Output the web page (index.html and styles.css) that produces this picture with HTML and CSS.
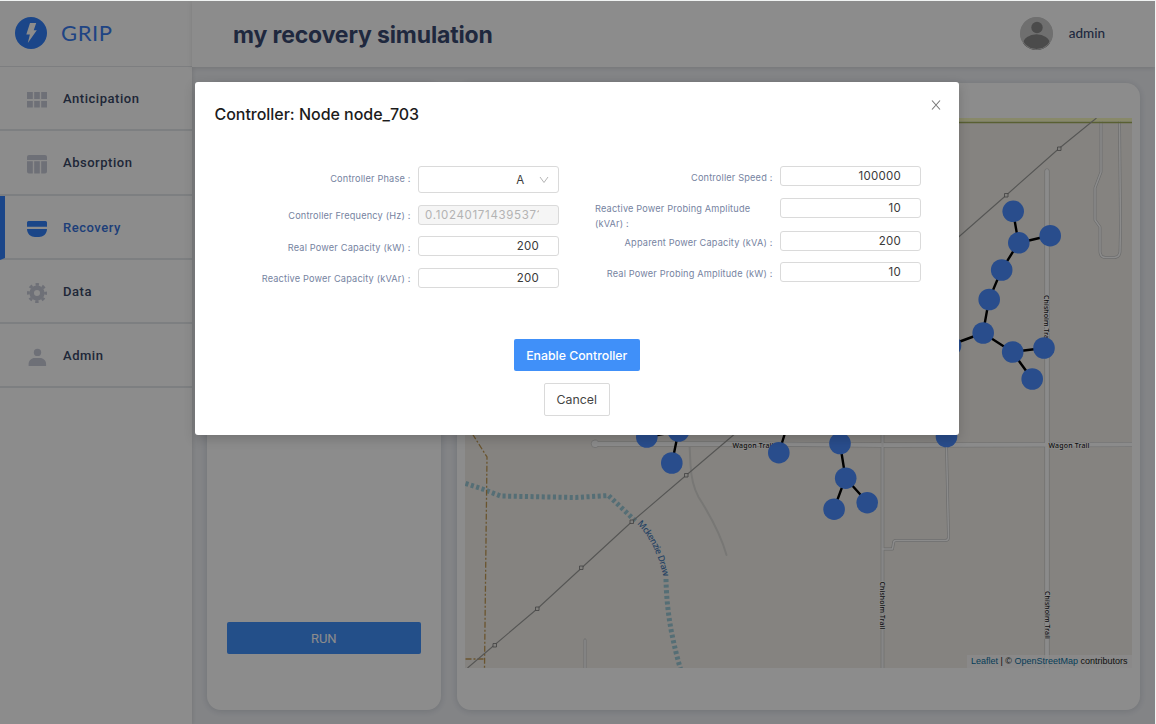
FILE: index.html
```html
<!DOCTYPE html>
<html lang="en">
<head>
<meta charset="utf-8">
<title>GRIP</title>
<link rel="stylesheet" href="styles.css">
</head>
<body>
<div class="app">
  <aside class="sidebar">
    <div class="brand">
      <svg class="logo" viewBox="0 0 32 32"><circle cx="16" cy="16" r="16" fill="#3280fa"/><path d="M15 6h6.2l-2.5 7.2h3.1L12.8 26l2.1-8.6h-3.6z" fill="#fff"/></svg>
      <span class="brand-name">GRIP</span>
    </div>
    <nav>
      <a class="item"><svg class="icon" viewBox="0 0 20 20"><path d="M0 2h5.8v7H0zM7.2 2h5.6v7H7.2zM14.2 2H20v7h-5.8zM0 11h5.8v6.500H0zM7.200 11h5.600v6.500H7.200zM14.200 11H20v6.500h-5.800z"/></svg><span>Anticipation</span></a>
      <a class="item"><svg class="icon" viewBox="0 0 20 20"><path d="M2 1h16a2 2 0 0 1 2 2v3H0V3a2 2 0 0 1 2-2zM0 7.200h5.800v12.300H2a2 2 0 0 1-2-2zM7.200 7.200h5.600v12.300H7.200zM14.200 7.200H20v10.300a2 2 0 0 1-2 2h-3.800z"/></svg><span>Absorption</span></a>
      <a class="item active"><svg class="icon" viewBox="0 0 20 20"><path d="M1.500 2h17A1.500 1.500 0 0 1 20 3.500V7.800H0V3.500A1.500 1.500 0 0 1 1.500 2zM0 10h20c0 5-4 8-8 8H8c-4 0-8-3-8-8z"/></svg><span>Recovery</span></a>
      <a class="item"><svg class="icon" viewBox="0 0 20 20"><circle cx="10" cy="10" r="5.300" fill="none" stroke="#c9ccd9" stroke-width="4.600"/><circle cx="10" cy="10" r="8.600" fill="none" stroke="#c9ccd9" stroke-width="2.800" stroke-dasharray="3.377 3.377" stroke-dashoffset="1.688"/></svg><span>Data</span></a>
      <a class="item"><svg class="icon" viewBox="0 0 20 20"><circle cx="10.500" cy="5.400" r="3.700"/><path d="M1.600 19v-2c0-3.500 3-6 6-6h5.500c3 0 6 2.500 6 6v2z"/></svg><span>Admin</span></a>
    </nav>
  </aside>
  <div class="content">
    <header class="topbar">
      <h1>my recovery simulation</h1>
      <div class="user">
        <svg class="avatar" viewBox="0 0 33 33"><clipPath id="av"><circle cx="16.500" cy="16.500" r="16.500"/></clipPath><g clip-path="url(#av)"><rect width="33" height="33" fill="#cbcbcb"/><circle cx="17" cy="10.500" r="5.700" fill="#898989"/><ellipse cx="16.500" cy="26.500" rx="13.300" ry="9.300" fill="#898989"/></g><circle cx="16.500" cy="16.500" r="16" fill="none" stroke="#cbcbcb" stroke-width="1"/></svg>
        <span>admin</span>
      </div>
    </header>
    <main class="panels">
      <section class="card controls"><button class="run">RUN</button></section>
      <section class="card map-card">
        <div class="map">
          <svg class="map-canvas" viewBox="464.500 118 667 550">
            <rect x="464" y="118" width="668" height="550" fill="#f2efe9"/>
            <g fill="none" stroke-linejoin="round" stroke-linecap="round">
              <g class="road-edge">
                <path class="wide" d="M594 444H740L882 445L1140 444.500M1046.500 171V680"/>
                <path class="mid" d="M882 425V680"/>
                <path class="thin" d="M882 549H892L893 543Q893 540.500 895.500 540.500H945Q948 540.500 948 537L946 445M1100.500 118V172L1094.500 188V220L1099.500 227V252Q1100 257.500 1105 257.500H1114Q1119 257 1119.500 252L1120 228L1119 118M584.500 640V680"/>
                <circle cx="594.500" cy="443.800" r="3.800" fill="#fff" stroke="#c8c8c8" stroke-width=".7"/>
              </g>
              <path class="track" d="M689 444L690 465Q691 484 698 497Q719 530 726 555"/>
              <g class="road">
                <path class="wide" d="M594 444H740L882 445L1140 444.500M1046.500 171V680"/>
                <path class="mid" d="M882 425V680"/>
                <path class="thin" d="M882 549H892L893 543Q893 540.500 895.500 540.500H945Q948 540.500 948 537L946 445M1100.500 118V172L1094.500 188V220L1099.500 227V252Q1100 257.500 1105 257.500H1114Q1119 257 1119.500 252L1120 228L1119 118M584.500 640V680"/>
              </g>
            </g>
            <path d="M464 119.500H1132" stroke="#f7fabf" stroke-width="4"/>
            <path d="M464 122.500H1132" stroke="#a3b05b" stroke-width="1.500"/>
            <path d="M465 483.500L482 489L500 496L575 497.500L608 495.500L635 521" class="water"/>
            <path d="M665.500 579Q666 606 671 632Q675 652 680 669" class="water"/>
            <path d="M472 434L486.500 457L485.500 541L484 668M465 659H484" class="border"/>
            <path d="M1096 118L1058.500 148.500L1006 195L957 238L733 435L686 475L631 522L581 568L536.500 609L494 645L467 668" fill="none" stroke="#9c9c9a" stroke-width="1.100"/>
            <g class="poles"><path d="M1057 147h3.500v3.500h-3.500zM1004 193.500h3.500v3.500h-3.500zM684 473.500h3.500v3.500h-3.500zM629.500 520h3.500v3.500h-3.500zM579 566h3.500v3.500h-3.500zM535 607h3.500v3.500h-3.500zM492.500 643.500h3.500v3.500h-3.500z"/></g>
            <path id="draw" d="M636.500 524Q656 543 663.500 580" fill="none"/>
            <text class="river"><textPath href="#draw" textLength="60">Mckenzie Draw</textPath></text>
            <g class="road-name">
              <text x="732" y="447.800" textLength="41">Wagon Trail</text>
              <text x="1048" y="447.600" textLength="41">Wagon Trail</text>
              <text transform="translate(1043.300 295) rotate(90)" textLength="48">Chisholm Trail</text>
              <text transform="translate(1044.800 591) rotate(90)" textLength="48">Chisholm Trail</text>
              <text transform="translate(879.500 581.500) rotate(90)" textLength="48">Chisholm Trail</text>
            </g>
            <path d="M1012.500 211L1018 243L1049.500 235.500M1018 243L1001 270L988.500 299.500L982.500 333L1012 352L1043.500 348M1012 352L1031.500 379M982.500 333L950 345M646.500 437L678 431L671.500 463M778.500 452.500L787 425M839.500 443.500L845 478L833.500 509M845 478L867 502.500" fill="none" stroke="#000" stroke-width="2.400"/>
            <g fill="#4b8cff">
              <circle cx="1012.700" cy="211.300" r="10.800"/><circle cx="1049.700" cy="235.700" r="10.800"/><circle cx="1018.300" cy="242.800" r="10.800"/><circle cx="1001.200" cy="270" r="10.800"/><circle cx="988.700" cy="299.500" r="10.800"/><circle cx="982.700" cy="333" r="10.800"/><circle cx="1012.200" cy="352" r="10.800"/><circle cx="1043.500" cy="348" r="10.800"/><circle cx="1031.700" cy="379" r="10.800"/><circle cx="950" cy="345.500" r="10.800"/>
              <circle cx="646.300" cy="437" r="10.800"/><circle cx="678" cy="431" r="10.800"/><circle cx="671.300" cy="463" r="10.800"/><circle cx="778.300" cy="452.700" r="10.800"/><circle cx="839.500" cy="443.500" r="10.800"/><circle cx="845.200" cy="478.200" r="10.800"/><circle cx="833.600" cy="509.200" r="10.800"/><circle cx="866.700" cy="502.700" r="10.800"/><circle cx="946" cy="436.500" r="10.800"/>
            </g>
          </svg>
          <div class="attribution"><a>Leaflet</a> | © <a>OpenStreetMap</a> contributors</div>
        </div>
      </section>
    </main>
  </div>
  <div class="mask">
    <div class="modal">
      <div class="modal-head">
        <h2>Controller: Node node_703</h2>
        <svg class="close" viewBox="0 0 10 10"><path d="M1 .5l8 9M9 .5l-8 9" fill="none" stroke="#777" stroke-width="1.100"/></svg>
      </div>
      <div class="form">
        <div class="col left">
          <div class="row phase"><label>Controller Phase :</label><div class="field select"><span>A</span><svg class="chevron" viewBox="0 0 10 8"><path d="M1 1l4 5.500L9 1" fill="none" stroke="#b5b5b5"/></svg></div></div>
          <div class="row"><label>Controller Frequency (Hz) :</label><div class="field disabled"><span>0.102401714395371</span></div></div>
          <div class="row"><label>Real Power Capacity (kW) :</label><div class="field"><span>200</span></div></div>
          <div class="row"><label>Reactive Power Capacity (kVAr) :</label><div class="field"><span>200</span></div></div>
        </div>
        <div class="col right">
          <div class="row"><label>Controller Speed :</label><div class="field"><span>100000</span></div></div>
          <div class="row tall"><label>Reactive Power Probing Amplitude (kVAr) :</label><div class="field"><span>10</span></div></div>
          <div class="row"><label>Apparent Power Capacity (kVA) :</label><div class="field"><span>200</span></div></div>
          <div class="row"><label>Real Power Probing Amplitude (kW) :</label><div class="field"><span>10</span></div></div>
        </div>
      </div>
      <div class="actions">
        <button class="primary">Enable Controller</button>
        <button class="cancel">Cancel</button>
      </div>
    </div>
  </div>
</div>
</body>
</html>
```
FILE: styles.css
```css
* { box-sizing: border-box; }
body { margin: 0; background: #f0f3f2; font-family: Inter, "Liberation Sans", sans-serif; overflow: hidden; }
button { font-family: inherit; padding: 0; }
h1, h2 { margin: 0; }
.app { position: relative; display: flex; width: 1155px; height: 723px; margin-top: 1px; background: #eff1f5; overflow: hidden; }

.sidebar { width: 192px; background: #fff; box-shadow: 1px 0 4px rgba(0, 0, 0, .1); }
.brand { display: flex; align-items: center; height: 66px; padding-left: 15px; border-bottom: 1px solid #e4e6ea; }
.logo { width: 32px; height: 32px; margin-top: -1px; }
.brand-name { margin: -1px 0 0 14px; font: 400 22px/30px Lato, sans-serif; letter-spacing: .6px; color: #3a7cf0; }
.item { display: flex; align-items: center; height: 64.25px; padding-left: 27px; border-bottom: 2px solid #e3e7ec; font: 500 13px/20px Roboto, sans-serif; letter-spacing: .53px; color: #394766; }
.item span { margin: 2px 0 0 16px; }
.icon { width: 20px; height: 20px; margin-top: 4px; fill: #c9ccd9; }
.item.active { padding-left: 22px; border-left: 5px solid #3280fa; color: #3572dc; }
.item.active .icon { fill: #3280f8; }

.content { flex: 1; display: flex; flex-direction: column; }
.topbar { display: flex; align-items: center; justify-content: space-between; height: 66px; padding: 0 50px 2px 41px; background: #fff; box-shadow: 0 1px 5px rgba(0, 0, 0, .12); }
.topbar h1 { padding-top: 3px; font-size: 23px; font-weight: 700; letter-spacing: -.14px; color: #3a4a72; }
.user { display: flex; align-items: center; gap: 15.5px; font: 500 13.5px Lato, sans-serif; color: #3a4a72; }
.user span { margin-top: -1px; }
.avatar { width: 33px; height: 33px; }
.panels { flex: 1; display: flex; gap: 16px; padding: 16px 15.5px 14px 15px; }
.card { background: #fff; border-radius: 14px; box-shadow: 0 1px 7px rgba(30, 40, 70, .17); }
.controls { display: flex; align-items: flex-end; width: 233.5px; padding: 0 20px 56px; }
.run { width: 100%; height: 32px; border: 0; border-radius: 2px; background: #4090fa; color: #fff; font: 400 13px Roboto, sans-serif; }
.map-card { flex: 1; padding: 35px 8px 0; }
.map { position: relative; height: 550px; }
.map-canvas { display: block; width: 100%; height: 100%; }
.road-edge { stroke: #c4c4c4; }
.road-edge .wide { stroke-width: 5; }
.road-edge .mid { stroke-width: 3.6; }
.road-edge .thin { stroke-width: 2.8; }
.road { stroke: #fdfdfd; }
.road .wide { stroke-width: 3.8; }
.road .mid { stroke-width: 2.4; stroke: #f4f4f4; }
.road .thin { stroke-width: 1.5; }
.track { stroke: #dad9d5; stroke-width: 2; }
.water { fill: none; stroke: #9bc8d6; stroke-width: 5; stroke-dasharray: 3.1 2.5; }
.border { fill: none; stroke: #c29a55; stroke-width: 1.3; stroke-dasharray: 6 2 2 2; }
.poles { fill: #eceae4; stroke: #777; stroke-width: .8; }
.river { font: 500 9px "Noto Sans", sans-serif; fill: #4377b5; }
.road-name { font: 500 7px "Noto Sans", sans-serif; fill: #222; stroke: #fff; stroke-width: 1.2; paint-order: stroke; }
.attribution { position: absolute; right: 0; bottom: 0; height: 13px; padding: 0 4px; background: rgba(255, 255, 255, .7); font: 9px/13px "Liberation Sans", sans-serif; color: #222; white-space: nowrap; }
.attribution a { color: #0a71a2; }

.mask { position: absolute; inset: 0; background: rgba(0, 0, 0, .45); }
.modal { display: flex; flex-direction: column; width: 763.5px; height: 353px; margin: 81px 0 0 195px; background: #fff; border-radius: 3px; box-shadow: 0 4px 12px rgba(0, 0, 0, .18); }
.modal-head { display: flex; justify-content: space-between; height: 84px; padding: 18px 17.5px 0 19.5px; }
.modal-head h2 { font-size: 16px; font-weight: 500; line-height: 28px; letter-spacing: -.03px; color: #1c1c1c; }
.close { width: 10px; height: 10px; margin-top: 0; }
.form { display: flex; height: 173px; }
.col { display: flex; flex-direction: column; gap: 11.5px; }
.left { width: 363.5px; }
.right { width: 362px; padding-left: 35px; }
.row { display: flex; justify-content: flex-end; align-items: flex-start; height: 20px; }
.row.phase { height: 27px; }
.row.tall { height: 21.5px; }
.row label { padding-top: 4px; margin-right: 7.5px; font-size: 9.2px; line-height: 15px; letter-spacing: .17px; color: #76839f; }
.left .row label { padding-top: 3.5px; }
.left .phase label { padding-top: 4.5px; }
.row.tall label { width: 177.5px; padding-top: 3px; }
.field { flex: none; display: flex; align-items: center; justify-content: flex-end; width: 140.5px; height: 20px; padding-right: 18.5px; border: 1px solid #dadada; border-radius: 3px; font-size: 11.5px; letter-spacing: .25px; color: #3a3a3a; }
.field.select { height: 27px; padding-right: 9px; gap: 14px; }
.field.disabled { justify-content: flex-start; padding-left: 6px; background: #f5f5f5; color: #b3b3b3; }
.field.disabled span { width: 114.5px; overflow: hidden; white-space: nowrap; letter-spacing: .68px; }
.chevron { width: 10px; height: 8px; }
.actions { display: flex; flex-direction: column; align-items: center; gap: 12px; }
.primary { width: 126px; height: 32px; border: 0; border-radius: 2px; background: #4090f9; color: #fff; font-size: 12.3px; font-weight: 500; }
.cancel { width: 66px; height: 33px; border: 1px solid #dadada; border-radius: 2px; background: #fff; color: #444; font-size: 12.3px; }
.left .field:not(.select):not(.disabled) { padding-right: 18.5px; }
```
